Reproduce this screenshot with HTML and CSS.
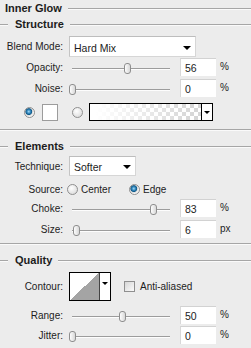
FILE: index.html
```html
<!DOCTYPE html>
<html lang="en">
<head>
  <meta charset="UTF-8">
  <title>Inner Glow</title>
  <link rel="stylesheet" href="styles.css">
</head>
<body>
  <div class="panel">
    <div class="title"><span>Inner Glow</span><i class="rule"></i></div>
    <div class="head"><i class="stub"></i><span>Structure</span><i class="rule"></i></div>

    <div class="row blend">
      <span class="lbl">Blend Mode:</span>
      <div class="select wide"><span>Hard Mix</span><b class="arrow"></b></div>
    </div>
    <div class="row opacity">
      <span class="lbl">Opacity:</span>
      <div class="slider"><i class="thumb" style="left:52px"></i></div>
      <div class="num">56</div><span class="unit">%</span>
    </div>
    <div class="row noise">
      <span class="lbl">Noise:</span>
      <div class="slider"><i class="thumb" style="left:-3px"></i></div>
      <div class="num">0</div><span class="unit">%</span>
    </div>
    <div class="row colors">
      <i class="radio on"></i>
      <i class="swatch"></i>
      <i class="radio"></i>
      <div class="grad"><div class="grad-fill"></div><div class="drop"><b class="arrow small"></b></div></div>
    </div>

    <div class="divider first"></div>
    <div class="head elements"><i class="stub"></i><span>Elements</span><i class="rule"></i></div>

    <div class="row technique">
      <span class="lbl">Technique:</span>
      <div class="select short"><span>Softer</span><b class="arrow"></b></div>
    </div>
    <div class="row source">
      <span class="lbl">Source:</span>
      <i class="radio"></i><span class="opt">Center</span>
      <i class="radio on edge"></i><span class="opt">Edge</span>
    </div>
    <div class="row choke">
      <span class="lbl">Choke:</span>
      <div class="slider"><i class="thumb" style="left:78px"></i></div>
      <div class="num">83</div><span class="unit">%</span>
    </div>
    <div class="row size">
      <span class="lbl">Size:</span>
      <div class="slider"><i class="thumb" style="left:1px"></i></div>
      <div class="num">6</div><span class="unit">px</span>
    </div>

    <div class="divider second"></div>
    <div class="head quality"><i class="stub"></i><span>Quality</span><i class="rule"></i></div>

    <div class="row contour-row">
      <span class="lbl">Contour:</span>
      <div class="contour"><div class="curve"></div><div class="drop"><b class="arrow small"></b></div></div>
      <i class="check"></i><span class="opt">Anti-aliased</span>
    </div>
    <div class="row range">
      <span class="lbl">Range:</span>
      <div class="slider"><i class="thumb" style="left:47px"></i></div>
      <div class="num">50</div><span class="unit">%</span>
    </div>
    <div class="row jitter">
      <span class="lbl">Jitter:</span>
      <div class="slider"><i class="thumb" style="left:-3px"></i></div>
      <div class="num">0</div><span class="unit">%</span>
    </div>
  </div>
</body>
</html>
```

FILE: styles.css
```css
* {
  margin: 0;
  padding: 0;
  box-sizing: border-box;
}
body {
  background: #ececec;
}
.panel {
  width: 251px;
  height: 348px;
  overflow: hidden;
  background: #ececec;
  font-family: "Liberation Sans", Arial, sans-serif;
  font-size: 10px;
  color: #1c1c1c;
}
.title,
.head {
  display: flex;
  align-items: center;
  height: 16px;
  font-size: 11px;
  font-weight: bold;
}
.title {
  padding-left: 5px;
}
.rule,
.stub {
  display: block;
  height: 1px;
  background: #a6a6a6;
  box-shadow: 0 1px 0 #fafafa;
}
.title .rule {
  flex: 1;
  margin-left: 6px;
}
.head .stub {
  width: 8px;
  margin-right: 7px;
}
.head .rule {
  flex: 1;
  margin-left: 6px;
}
.divider {
  height: 1px;
  background: #a6a6a6;
  box-shadow: 0 1px 0 #fafafa;
}
.row {
  display: flex;
  align-items: center;
  height: 18px;
}
.lbl {
  width: 63px;
  flex: none;
  text-align: right;
}

/* vertical rhythm */
.blend { margin-top: 4px; height: 21px; }
.opacity { margin-top: 1px; }
.noise { margin-top: 3px; }
.colors { margin-top: 6px; }
.divider.first { margin-top: 8px; }
.head.elements { margin-top: 8px; }
.technique { margin-top: 2px; height: 20px; }
.source { margin-top: 4px; }
.choke { margin-top: 1px; }
.size { margin-top: 3px; }
.divider.second { margin-top: 5px; }
.head.quality { margin-top: 8px; }
.contour-row { margin-top: 4px; height: 29px; }
.range { margin-top: 5px; }
.jitter { margin-top: 2px; }

/* dropdowns */
.select {
  display: flex;
  align-items: center;
  justify-content: space-between;
  height: 100%;
  margin-left: 6px;
  padding: 2px 4px 0 4px;
  background: #fff;
  border: 1px solid #d6d6d6;
  border-top-color: #bdbdbd;
  border-left-color: #c4c4c4;
  font-size: 10.5px;
}
.select.wide { width: 127px; }
.select.short { width: 67px; }
.arrow {
  display: block;
  width: 0;
  height: 0;
  border-left: 4px solid transparent;
  border-right: 4px solid transparent;
  border-top: 4px solid #000;
}
.arrow.small {
  border-left-width: 3px;
  border-right-width: 3px;
  border-top-width: 3px;
}

/* sliders */
.slider {
  position: relative;
  width: 98px;
  height: 100%;
  margin-left: 9px;
  margin-right: 10px;
}
.slider::before {
  content: "";
  position: absolute;
  left: 0;
  right: 0;
  top: 10px;
  height: 1px;
  background: #9c9c9c;
  box-shadow: 0 1px 0 #fdfdfd;
}
.thumb {
  position: absolute;
  top: 5px;
  width: 7px;
  height: 11px;
  border: 1px solid #8e8e8e;
  border-radius: 3px 3px 3px 3px;
  background: linear-gradient(90deg, #fdfdfd, #d8d8d8);
}
.num {
  width: 36px;
  height: 18px;
  padding: 3px 0 0 4px;
  background: #fff;
  border-top: 1px solid #d2d2d2;
  border-left: 1px solid #d8d8d8;
  font-size: 10.5px;
}
.unit {
  margin-left: 4px;
  margin-top: -2px;
}

/* radios & checks */
.radio {
  display: block;
  width: 11px;
  height: 11px;
  flex: none;
  border-radius: 50%;
  border: 1px solid #8f8f8f;
  background: radial-gradient(circle at 40% 35%, #ffffff, #d4d4d4);
}
.radio.on {
  background: radial-gradient(circle at 42% 40%, #a8ddf7 0, #3b8fc4 1.6px, #0f5a8a 3px, #dcdcdc 3.8px, #f6f6f6 5px);
}
.colors .radio.on { margin-left: 24px; }
.swatch {
  display: block;
  width: 16px;
  height: 17px;
  margin-left: 7px;
  background: #fff;
  border: 1px solid #9c9c9c;
}
.colors .radio:not(.on) { margin-left: 14px; }
.grad {
  display: flex;
  width: 124px;
  height: 18px;
  margin-left: 6px;
  border: 1px solid #000;
  background: #fff;
}
.grad-fill {
  flex: 1;
  background:
    linear-gradient(90deg, #fff 5%, rgba(255, 255, 255, 0) 95%),
    repeating-conic-gradient(#d6d6d6 0 25%, #fff 0 50%) 0 0 / 8px 8px;
}
.drop {
  display: flex;
  align-items: center;
  justify-content: center;
  width: 11px;
  border-left: 1px solid #000;
  background: #fff;
}
.source .radio { margin-left: 4px; }
.source .radio.edge { margin-left: 18px; }
.opt { margin-left: 3px; }

.contour {
  display: flex;
  width: 42px;
  height: 29px;
  margin-left: 6px;
  border: 1px solid #000;
  background: #fff;
}
.curve {
  flex: 1;
  background: linear-gradient(to bottom right, #fff 50%, #a4a4a4 50%);
}
.contour .drop {
  align-items: flex-start;
  padding-top: 9px;
  border-left-color: #444;
}
.check {
  display: block;
  width: 11px;
  height: 11px;
  margin-left: 13px;
  border: 1px solid #8f8f8f;
  background: linear-gradient(135deg, #d6d6d6, #fbfbfb);
}
.contour-row .opt {
  margin-left: 5px;
}
```
